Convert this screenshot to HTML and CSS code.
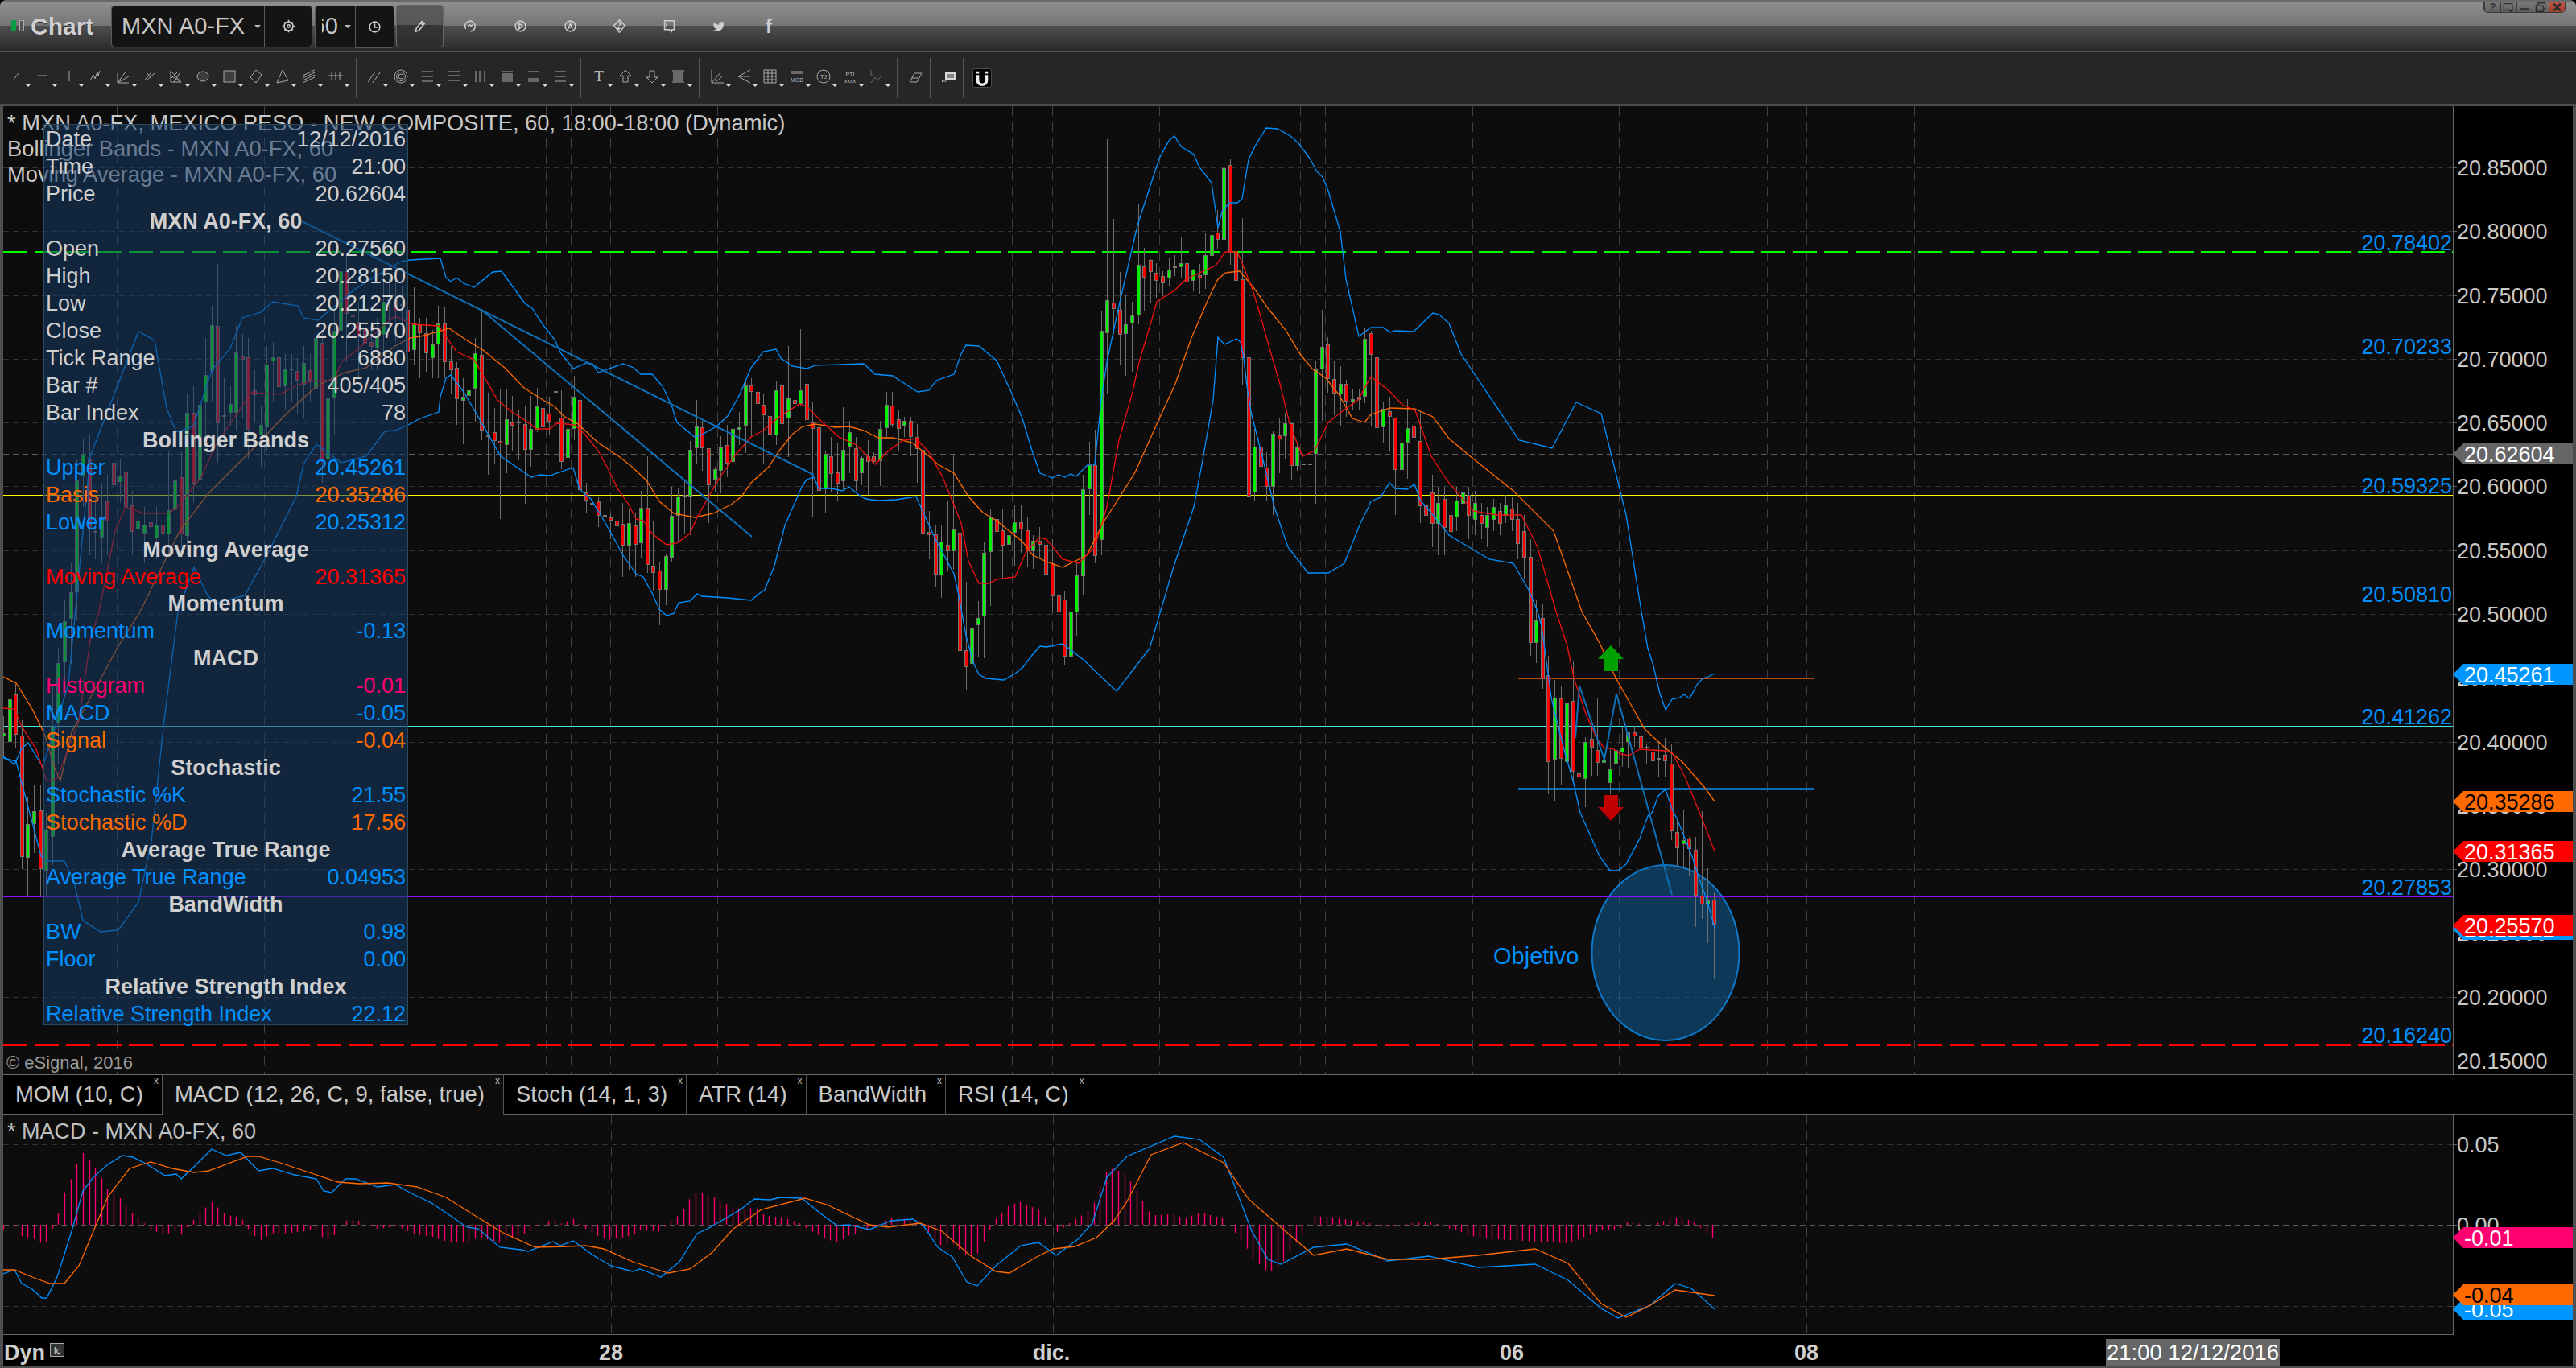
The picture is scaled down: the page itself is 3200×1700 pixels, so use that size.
FILE: index.html
```html
<!DOCTYPE html>
<html lang="es">
<head>
    <meta charset="UTF-8">
    <title>Chart - MXN A0-FX</title>
    <link rel="stylesheet" href="styles.css">
</head>
<body>
    <div class="window">
        <div class="titlebar">
            <div class="logo"><i></i><i></i></div>
            <div class="app-name">Chart</div>
            <div class="field symbol-field">
                <span class="symbol">MXN A0-FX</span><span class="caret"></span>
                <span class="field-icon"><svg class="bar-icon" viewBox="0 0 20 20"><circle cx="10" cy="10" r="6.5"/><circle cx="10" cy="10" r="2"/><path d="M10 1v3M10 16v3M1 10h3M16 10h3M4 4l2 2M14 14l2 2M16 4l-2 2M4 16l2-2"/></svg></span>
            </div>
            <div class="field interval-field"><span class="interval">60</span><span class="caret"></span></div>
            <div class="field clock-field"><svg class="bar-icon" viewBox="0 0 20 20"><circle cx="10" cy="10" r="7.5"/><path d="M10 5v5.5h4"/></svg></div>
            <div class="pencil-btn"><svg class="bar-icon" viewBox="0 0 20 20"><path d="M5 13L13 3l4 3-8 10-5 2zM11 5.500l4 3"/></svg></div>
            <div class="bar-btn"><svg class="bar-icon" viewBox="0 0 20 20"><path d="M3 14A7.500 7.500 0 1 1 10 17.500M6 11l3-3 2 2 3-3"/></svg></div>
            <div class="bar-btn"><svg class="bar-icon" viewBox="0 0 20 20"><circle cx="10" cy="10" r="7.500"/><path d="M8 6l5 4-5 4z"/></svg></div>
            <div class="bar-btn"><svg class="bar-icon" viewBox="0 0 20 20"><circle cx="10" cy="10" r="7.500"/><path d="M7 14l3-8 3 8M8 11.500h4"/></svg></div>
            <div class="bar-btn"><svg class="bar-icon" viewBox="0 0 20 20"><path d="M10 1l8 8-8 10-8-10z"/><path class="solid" d="M11 3l3 3h-2v3h-2V6H8zM9 16l-3-3h2v-3h2v3h2z"/></svg></div>
            <div class="bar-btn"><svg class="bar-icon" viewBox="0 0 20 20"><path d="M3 2h14v13h-3l-1 3-3-3H3zM6 6v5"/></svg></div>
            <div class="bar-btn"><svg class="bar-icon soft" viewBox="0 0 24 24"><path class="solid" d="M23 3a10.900 10.900 0 0 1-3 1.500 4.500 4.500 0 0 0-7.900 3v1A10.700 10.700 0 0 1 3 4s-4 9 5 13a11.600 11.600 0 0 1-7 2c9 5 20 0 20-11.500a4.500 4.500 0 0 0-.1-.8A7.700 7.700 0 0 0 23 3z"/></svg></div>
            <div class="bar-btn"><span class="facebook">f</span></div>
            <div class="win-btns">
                <span class="win-btn">?</span>
                <span class="win-btn"><svg viewBox="0 0 20 16"><path d="M3 3h12v9H3zM10 12l3 2 3-2z"/></svg></span>
                <span class="win-btn"><svg viewBox="0 0 20 16"><path class="thick" d="M4 11h12"/></svg></span>
                <span class="win-btn"><svg viewBox="0 0 20 16"><path d="M3 6h10v8H3zM6 5V2h10v8h-2"/></svg></span>
                <span class="win-btn win-close"><svg viewBox="0 0 20 16"><path class="thick" d="M5 3l10 10M15 3L5 13"/></svg></span>
            </div>
        </div>

        <div class="toolbar">
            <span class="tool"><svg viewBox="0 0 20 20"><path d="M5 15l7-9"/></svg></span>
            <span class="tool"><svg viewBox="0 0 20 20"><path d="M3 9h12"/></svg></span>
            <span class="tool"><svg viewBox="0 0 20 20"><path d="M9 3v13"/></svg></span>
            <span class="tool"><svg viewBox="0 0 20 20"><path d="M2 15l4-7 2 5 3-9 1 5 2-6"/></svg></span>
            <span class="tool"><svg viewBox="0 0 20 20"><path d="M3 18L14 3M3 18l14-8M3 18h14M3 18V6"/></svg></span>
            <span class="tool"><svg viewBox="0 0 20 20"><path d="M3 15L13 4M6 15L16 6M7 6l5 7"/></svg></span>
            <span class="tool"><svg viewBox="0 0 20 20"><path d="M3 3l13 14M3 9l13 8M3 17h13M3 3v14M7 17l7-11M3 13l9-9"/></svg></span>
            <span class="tool"><svg viewBox="0 0 20 20"><ellipse class="shade" cx="10" cy="10" rx="7" ry="6"/></svg></span>
            <span class="tool"><svg viewBox="0 0 20 20"><rect class="shade" x="3" y="3" width="14" height="14"/></svg></span>
            <span class="tool"><svg viewBox="0 0 20 20"><path d="M3 11l7-9 7 6-7 10z"/></svg></span>
            <span class="tool"><svg viewBox="0 0 20 20"><path d="M3 18L10 2l7 13z"/></svg></span>
            <span class="tool"><svg viewBox="0 0 20 20"><path d="M2 9l15-7M2 12l15-7M2 15l15-7M2 18l15-7"/></svg></span>
            <span class="tool"><svg viewBox="0 0 20 20"><path d="M1 9h18M5 4v10M10 4v10M15 4v10"/></svg></span>
            <span class="tool-sep"></span>
            <span class="tool"><svg viewBox="0 0 20 20"><path d="M2 17L11 4M8 18L17 5"/></svg></span>
            <span class="tool"><svg viewBox="0 0 20 20"><circle cx="10" cy="10" r="8"/><circle cx="10" cy="10" r="5.500"/><circle cx="10" cy="10" r="3"/></svg></span>
            <span class="tool"><svg viewBox="0 0 20 20"><path d="M3 4h14M3 10h14M3 16h14"/></svg></span>
            <span class="tool"><svg viewBox="0 0 20 20"><path d="M3 4h14M3 9h14M3 15h14"/></svg></span>
            <span class="tool"><svg viewBox="0 0 20 20"><path d="M4 3v14M9 3v14M15 3v14"/></svg></span>
            <span class="tool"><svg viewBox="0 0 20 20"><path d="M3 4h14M3 16h14"/><rect class="band" x="3" y="6" width="14" height="8"/></svg></span>
            <span class="tool"><svg viewBox="0 0 20 20"><path d="M3 4h14M3 13h14M3 16h14"/></svg></span>
            <span class="tool"><svg viewBox="0 0 20 20"><path d="M3 4h14M3 10h14M3 16h14"/></svg></span>
            <span class="tool-sep"></span>
            <span class="tool"><svg viewBox="0 0 20 20"><text class="tool-t" x="10" y="16">T</text></svg></span>
            <span class="tool"><svg viewBox="0 0 20 20"><path d="M10 2l7 7h-4v8H7V9H3z"/></svg></span>
            <span class="tool"><svg viewBox="0 0 20 20"><path d="M10 18l7-7h-4V3H7v8H3z"/></svg></span>
            <span class="tool"><svg viewBox="0 0 20 20"><path d="M2 3h15M2 17h15"/><rect class="band" x="3" y="4" width="13" height="12"/></svg></span>
            <span class="tool-sep"></span>
            <span class="tool"><svg viewBox="0 0 20 20"><path d="M3 2v16h15M4 17L15 4M8 17l8-7"/></svg></span>
            <span class="tool"><svg viewBox="0 0 20 20"><path d="M18 2L3 10l15 8M3 10h15"/></svg></span>
            <span class="tool"><svg viewBox="0 0 20 20"><path d="M2 2h15v16H2zM2 6h15M2 10h15M2 14h15M7 2v16M12 2v16"/></svg></span>
            <span class="tool"><svg viewBox="0 0 20 20"><rect class="band" x="2" y="3" width="16" height="4"/><text class="tool-small" x="10" y="17">MOB</text></svg></span>
            <span class="tool"><svg viewBox="0 0 20 20"><circle cx="10" cy="10" r="8"/><text class="tool-small" x="10" y="13">TJ</text></svg></span>
            <span class="tool"><svg viewBox="0 0 20 20"><text class="tool-small" x="10" y="10">PTI</text><text class="tool-small" x="10" y="18">xxxx</text></svg></span>
            <span class="tool tool-dim"><svg viewBox="0 0 20 20"><path d="M3 2v6h3M3 18l5-7 3 4 5-6"/></svg></span>
            <span class="tool-sep"></span>
            <span class="tool plain"><svg viewBox="0 0 20 20"><path d="M3 17L9 6h9l-6 11zM6 12h9"/></svg></span>
            <span class="tool-sep"></span>
            <span class="tool plain"><svg viewBox="0 0 20 20"><path class="solid" d="M6 5h13v10H6z"/><path class="cut" d="M8 8h9M8 11h9"/><path d="M2 16h6M4 14l-2 2 2 2"/></svg></span>
            <span class="tool-sep"></span>
            <span class="magnet"><svg viewBox="0 0 24 24"><path d="M6 8v7a6 6 0 0 0 12 0V8"/><path class="tip" d="M6 3v3M18 3v3"/></svg></span>
        </div>

        <div class="workspace">
            <div class="pane main-pane">
                <div class="plot">
                    <svg id="mainPlot" class="plot-svg" viewBox="4 132 3043 1203"></svg>
                    <div class="legend">
                        <div>* MXN A0-FX, MEXICO PESO - NEW COMPOSITE, 60, 18:00-18:00 (Dynamic)</div>
                        <div>Bollinger Bands - MXN A0-FX, 60</div>
                        <div>Moving Average - MXN A0-FX, 60</div>
                    </div>
                    <div class="copyright">© eSignal, 2016</div>
                    <div class="data-panel">
                        <div class="row"><span>Date</span><span>12/12/2016</span></div>
                        <div class="row"><span>Time</span><span>21:00</span></div>
                        <div class="row"><span>Price</span><span>20.62604</span></div>
                        <div class="row head">MXN A0-FX, 60</div>
                        <div class="row"><span>Open</span><span>20.27560</span></div>
                        <div class="row"><span>High</span><span>20.28150</span></div>
                        <div class="row"><span>Low</span><span>20.21270</span></div>
                        <div class="row"><span>Close</span><span>20.25570</span></div>
                        <div class="row"><span>Tick Range</span><span>6880</span></div>
                        <div class="row"><span>Bar #</span><span>405/405</span></div>
                        <div class="row"><span>Bar Index</span><span>78</span></div>
                        <div class="row head">Bollinger Bands</div>
                        <div class="row blue"><span>Upper</span><span>20.45261</span></div>
                        <div class="row orange"><span>Basis</span><span>20.35286</span></div>
                        <div class="row blue"><span>Lower</span><span>20.25312</span></div>
                        <div class="row head">Moving Average</div>
                        <div class="row red"><span>Moving Average</span><span>20.31365</span></div>
                        <div class="row head">Momentum</div>
                        <div class="row blue"><span>Momentum</span><span>-0.13</span></div>
                        <div class="row head">MACD</div>
                        <div class="row pink"><span>Histogram</span><span>-0.01</span></div>
                        <div class="row blue"><span>MACD</span><span>-0.05</span></div>
                        <div class="row orange"><span>Signal</span><span>-0.04</span></div>
                        <div class="row head">Stochastic</div>
                        <div class="row blue"><span>Stochastic %K</span><span>21.55</span></div>
                        <div class="row orange"><span>Stochastic %D</span><span>17.56</span></div>
                        <div class="row head">Average True Range</div>
                        <div class="row blue"><span>Average True Range</span><span>0.04953</span></div>
                        <div class="row head">BandWidth</div>
                        <div class="row blue"><span>BW</span><span>0.98</span></div>
                        <div class="row blue"><span>Floor</span><span>0.00</span></div>
                        <div class="row head">Relative Strength Index</div>
                        <div class="row blue"><span>Relative Strength Index</span><span>22.12</span></div>
                    </div>
                </div>
                <svg id="mainAxis" class="axis-svg" viewBox="3047 132 149 1203"></svg>
            </div>

            <div class="tabs">
                <div class="tab">MOM (10, C)<span class="tab-x">x</span></div>
                <div class="tab active">MACD (12, 26, C, 9, false, true)<span class="tab-x">x</span></div>
                <div class="tab">Stoch (14, 1, 3)<span class="tab-x">x</span></div>
                <div class="tab">ATR (14)<span class="tab-x">x</span></div>
                <div class="tab">BandWidth<span class="tab-x">x</span></div>
                <div class="tab">RSI (14, C)<span class="tab-x">x</span></div>
            </div>

            <div class="pane study-pane">
                <div class="plot">
                    <svg id="studyPlot" class="plot-svg" viewBox="4 1385 3043 274"></svg>
                    <div class="study-title">* MACD - MXN A0-FX, 60</div>
                </div>
                <svg id="studyAxis" class="axis-svg" viewBox="3047 1385 149 274"></svg>
            </div>

            <svg id="timeAxis" class="time-axis" viewBox="4 1659 3192 38"></svg>
        </div>
    </div>
    <script src="chart.js"></script>
</body>
</html>
```

FILE: styles.css
```css
* {
    box-sizing: border-box;
}

body {
    margin: 0;
    background: #000;
    font-family: "Liberation Sans", Arial, sans-serif;
    color: #c8c8c8;
    overflow: hidden;
}

.window {
    width: 3200px;
    height: 1700px;
    display: flex;
    flex-direction: column;
    background: #4f4f4f;
    border-radius: 8px 8px 0 0;
    overflow: hidden;
}

/* title bar */
.titlebar {
    height: 63px;
    flex: none;
    display: flex;
    align-items: center;
    padding-left: 14px;
    border-top: 2px solid #6a6a6a;
    background: linear-gradient(#8f8f8f 0, #757575 30px, #4e4e4e 30px, #2b2b2b 100%);
}

.logo {
    display: flex;
    gap: 4px;
    margin-top: -2px;
}

.logo i {
    width: 6px;
    height: 14px;
    background: #0c9c45;
}

.logo i + i {
    background: #555;
    border: 1px solid #aaa;
}

.app-name {
    margin-left: 8px;
    width: 100px;
    font-size: 30px;
    font-weight: bold;
    color: #d0d0d0;
    text-shadow: 0 1px 1px #222;
}

.field {
    height: 52px;
    display: flex;
    align-items: center;
    background: #141414;
    border: 1px solid #5a5a5a;
    border-radius: 4px;
}

.symbol-field {
    width: 250px;
    padding-left: 12px;
}

.symbol {
    width: 166px;
    font-size: 29px;
}

.caret {
    width: 0;
    height: 0;
    border: 4px solid transparent;
    border-top: 4px solid #bbb;
    border-bottom: 0;
}

.field-icon {
    margin-left: 4px;
    width: 59px;
    height: 100%;
    display: flex;
    align-items: center;
    justify-content: center;
    border-left: 1px solid #5a5a5a;
}

.interval-field {
    width: 50px;
    margin-left: 3px;
    padding-right: 5px;
    justify-content: flex-end;
    border-radius: 4px 0 0 4px;
    border-right: 0;
    overflow: hidden;
}

.interval {
    width: 20px;
    margin-right: 8px;
    font-size: 29px;
    direction: rtl;
    overflow: hidden;
}

.clock-field {
    width: 49px;
    height: 53px;
    justify-content: center;
    margin-top: 2px;
    border-radius: 0 4px 4px 0;
}

.pencil-btn {
    width: 59px;
    height: 53px;
    margin-left: 2px;
    display: flex;
    align-items: center;
    justify-content: center;
    background: linear-gradient(#5b5b5b 0, #565656 48%, #363636 48%, #2c2c2c 100%);
    border: 1px solid #666;
    border-radius: 4px;
}

.bar-btn {
    width: 61.7px;
    flex: none;
    display: flex;
    justify-content: center;
}

.pencil-btn + .bar-btn {
    margin-left: 3px;
}

.bar-icon {
    width: 17px;
    height: 17px;
    fill: none;
    stroke: #cfcfcf;
    stroke-width: 1.8;
}

.bar-icon.soft {
    width: 16px;
    height: 16px;
}

.bar-icon .solid {
    fill: #cfcfcf;
    stroke: none;
}

.facebook {
    font-size: 24px;
    font-weight: bold;
    line-height: 24px;
    color: #cfcfcf;
}

.win-btns {
    margin-left: auto;
    margin-right: 13px;
    align-self: flex-start;
    display: flex;
    height: 14px;
    border: 1px solid #3a3a3a;
    border-top: 0;
    border-radius: 0 0 5px 5px;
    overflow: hidden;
}

.win-btn {
    width: 20px;
    height: 100%;
    display: flex;
    align-items: center;
    justify-content: center;
    font-size: 13px;
    font-weight: bold;
    line-height: 13px;
    color: #2d2d2d;
    background: linear-gradient(#7c7c7c, #5f5f5f);
    border-left: 1px solid #3a3a3a;
}

.win-btn svg {
    width: 20px;
    height: 14px;
    fill: none;
    stroke: #2d2d2d;
    stroke-width: 1.5;
}

.win-btn .thick {
    stroke-width: 3;
}

.win-close {
    background: linear-gradient(#c0564a, #a2402f);
}

/* drawing tools */
.toolbar {
    height: 65px;
    flex: none;
    display: flex;
    align-items: center;
    padding-left: 5.5px;
    margin-top: 1px;
    background: #262626;
}

.tool {
    position: relative;
    width: 33px;
    height: 24px;
    padding-right: 2px;
    flex: none;
    display: flex;
    justify-content: center;
}

.tool::after {
    content: "";
    position: absolute;
    right: 1px;
    bottom: 1px;
    border: 3px solid transparent;
    border-top: 3px solid #ddd;
    border-bottom: 0;
}

.tool svg {
    width: 20px;
    height: 20px;
    fill: none;
    stroke: #a8a8a8;
    stroke-width: 1;
}

.tool .shade {
    fill: #3d3d3d;
}

.tool .band {
    fill: #6a6a6a;
    stroke: none;
}

.tool .solid {
    fill: #d8d8d8;
    stroke: none;
}

.tool .cut {
    stroke: #333;
}

.tool-t {
    font-family: "Liberation Serif", serif;
    font-size: 19px;
    fill: #bbb;
    stroke: none;
    text-anchor: middle;
}

.tool-small {
    font-size: 7px;
    fill: #bbb;
    stroke: none;
    text-anchor: middle;
}

.tool-dim svg {
    stroke: #666;
}

.tool.plain {
    width: 26px;
    padding: 0 0 0 4px;
}

.tool.plain::after {
    display: none;
}

.tool-sep {
    width: 1px;
    height: 50px;
    margin: 0 7px;
    flex: none;
    background: #555;
}

.magnet {
    margin-left: 4.5px;
    width: 24px;
    height: 24px;
    background: #000;
    border: 1px solid #4c4c4c;
    border-radius: 3px;
}

.magnet svg {
    display: block;
    width: 22px;
    height: 22px;
    fill: none;
    stroke: #eee;
    stroke-width: 4;
}

/* chart area */
.workspace {
    margin: 3px 4px 3px;
    height: 1565px;
    display: flex;
    flex-direction: column;
    background: #000;
}

.pane {
    display: flex;
}

.main-pane {
    height: 1203px;
}

.study-pane {
    height: 274px;
}

.plot {
    position: relative;
    width: 3043px;
    height: 100%;
    flex: none;
    background: #0d0d0d;
    overflow: hidden;
}

.plot-svg,
.axis-svg {
    display: block;
    height: 100%;
}

.plot-svg {
    width: 100%;
}

.axis-svg {
    width: 149px;
    flex: none;
}

.legend {
    position: absolute;
    left: 5px;
    top: 5px;
    font-size: 27.3px;
    line-height: 32px;
    color: #c8c8c8;
    white-space: nowrap;
}

.copyright {
    position: absolute;
    left: 4px;
    bottom: 1px;
    font-size: 22px;
    color: #9a9a9a;
}

.study-title {
    position: absolute;
    left: 5px;
    top: 6px;
    font-size: 27px;
    color: #c0c0c0;
}

.data-panel {
    position: absolute;
    left: 50px;
    top: 22px;
    width: 453px;
    height: 1120px;
    padding: 1px 2px 0;
    background: rgba(22, 59, 104, 0.54);
    border: 1px solid #2a4a62;
    font-size: 27px;
    line-height: 34px;
    white-space: nowrap;
}

.row {
    height: 33.97px;
    display: flex;
    justify-content: space-between;
    color: #cfcfcf;
}

.row.head {
    justify-content: center;
    font-weight: bold;
}

.row.blue {
    color: #0090ff;
}

.row.orange {
    color: #ff6a00;
}

.row.red {
    color: #ff0000;
}

.row.pink {
    color: #ff0070;
}

.tabs {
    height: 50px;
    flex: none;
    display: flex;
    background: #000;
    border-top: 1px solid #666;
    border-bottom: 1px solid #666;
}

.tab {
    position: relative;
    padding: 0 23px 0 15px;
    font-size: 27.5px;
    line-height: 48px;
    border-right: 1px solid #555;
    white-space: nowrap;
    color: #c8c8c8;
}

.tab.active {
    height: 49px;
    background: #0d0d0d;
}

.tab-x {
    position: absolute;
    right: 4px;
    top: 1px;
    font-size: 12px;
    line-height: 13px;
    color: #bbb;
}

.time-axis {
    display: block;
    width: 3192px;
    height: 38px;
    flex: none;
}

/* svg drawing */
.grid {
    stroke: #333;
    stroke-dasharray: 7 5;
    shape-rendering: crispEdges;
}

.grid-v {
    stroke: #404040;
    stroke-dasharray: 12 8;
    shape-rendering: crispEdges;
}

.grid-mark {
    stroke: #5a5a5a;
    stroke-dasharray: 7 5;
    shape-rendering: crispEdges;
}

.level {
    stroke-width: 1;
    shape-rendering: crispEdges;
}

.level-green {
    stroke: #00ff00;
    stroke-width: 3;
    stroke-dasharray: 30 9;
}

.level-white {
    stroke: #f0f0f0;
}

.level-yellow {
    stroke: #ffff00;
}

.level-darkred {
    stroke: #d01414;
}

.level-cyan {
    stroke: #40e8e8;
}

.level-purple {
    stroke: #8c10ff;
}

.level-reddash {
    stroke: #ff0000;
    stroke-width: 3;
    stroke-dasharray: 30 9;
}

.level-box-orange {
    stroke: #b84c10;
    stroke-width: 2;
}

.level-box-blue {
    stroke: #0a6cb4;
    stroke-width: 3;
}

.target {
    fill: rgba(16, 96, 156, 0.52);
    stroke: #0f78c8;
    stroke-width: 2;
}

.wick {
    stroke: #6e6e6e;
    stroke-width: 1;
    shape-rendering: crispEdges;
}

.candle {
    stroke: #777;
    stroke-width: 1;
    shape-rendering: crispEdges;
}

.candle-g {
    fill: #00ee00;
}

.candle-r {
    fill: #ff0000;
}

.candle-d {
    fill: #777;
}

.line {
    fill: none;
    stroke-width: 1.3;
}

.line-blue {
    stroke: #0090ff;
}

.line-red {
    stroke: #f01010;
}

.line-orange {
    stroke: #ff6a00;
}

.line-trend {
    stroke: #0d70b8;
    stroke-width: 2;
}

.hist {
    stroke: #ff0070;
    stroke-width: 1.4;
}

.arrow-up {
    fill: #00a000;
}

.arrow-down {
    fill: #c00000;
}

.target-label {
    font-size: 29px;
    fill: #0090ff;
}

.level-label {
    font-size: 27px;
    fill: #0090ff;
    text-anchor: end;
}

.axis-label {
    font-size: 27px;
    fill: #c8c8c8;
}

.axis-tick,
.axis-line {
    stroke: #666;
    shape-rendering: crispEdges;
}

.tag-label {
    font-size: 27px;
    fill: #fff;
}

.tag-label.dark {
    fill: #000;
}

.tag-grey {
    fill: #666;
}

.tag-blue {
    fill: #0096ff;
}

.tag-orange {
    fill: #ff6a00;
}

.tag-red {
    fill: #ff0000;
}

.tag-pink {
    fill: #ff0070;
}

.time-label {
    font-size: 27px;
    font-weight: bold;
    fill: #cfcfcf;
    text-anchor: middle;
}

.time-label.dyn-label {
    text-anchor: start;
}

.time-tag {
    fill: #666;
}

.time-now {
    font-size: 27.500px;
    fill: #fff;
    text-anchor: middle;
}

.dyn-box {
    fill: #333;
    stroke: #aaa;
}

.dyn-mark {
    font-size: 11px;
    fill: #ddd;
    text-anchor: middle;
}
```

FILE: chart.js
```js
// MXN A0-FX chart. All the numbers below are screen pixels of the window,
// the svg viewBoxes are set so the plots can use them directly.
const NS = 'http://www.w3.org/2000/svg';
const BAR_STEP = 7.61;

function add(svg, tag, attrs, text) {
    const node = document.createElementNS(NS, tag);
    for (const key in attrs) {
        node.setAttribute(key, attrs[key]);
    }
    if (text !== undefined) {
        node.textContent = text;
    }
    svg.appendChild(node);
    return node;
}

function priceY(p) {
    return 208 + (20.85 - p) * 1585.7;
}

function drawLine(svg, points, cls) {
    add(svg, 'polyline', { points: points.map(p => p.join(',')).join(' '), class: 'line ' + cls });
}

// rows: [body top, body bottom, wick top, wick bottom, kind]
function drawCandles(svg, startX, rows) {
    rows.forEach((row, i) => {
        const x = Math.round(startX + i * BAR_STEP);
        const [top, bottom, wickTop, wickBottom, kind] = row;
        add(svg, 'line', { x1: x + 0.5, x2: x + 0.5, y1: wickTop, y2: wickBottom, class: 'wick' });
        add(svg, 'rect', {
            x: x - 1.5,
            y: top + 0.5,
            width: 4,
            height: Math.max(bottom - top, 1),
            class: 'candle candle-' + kind
        });
    });
}

function drawTag(svg, y, label, color, dark) {
    const t = y - 13;
    const b = y + 13;
    add(svg, 'polygon', { points: `3047,${y} 3060,${t} 3196,${t} 3196,${b} 3060,${b}`, class: 'tag-' + color });
    add(svg, 'text', { x: 3061, y: y + 10, class: dark ? 'tag-label dark' : 'tag-label' }, label);
}

// price pane data
const candlesLeft = [
    [911,914,890,940,'g'], [869,921,850,945,'g'], [863,912,850,930,'r'], [914,1064,895,1080,'r'],
    [1024,1065,990,1113,'g'], [1008,1023,975,1060,'g'], [1007,1079,975,1113,'r'], [1031,1081,1010,1113,'g'],
    [903,1039,850,1075,'g'], [824,897,805,950,'g'], [772,822,745,860,'g'], [736,768,700,825,'g'],
    [597,735,570,770,'g'], [564,590,545,630,'g'], [570,657,540,690,'r'], [660,661,620,695,'d'],
    [645,667,600,700,'g'], [623,647,590,690,'r'], [575,602,555,650,'r'], [592,598,570,625,'g'],
    [586,629,575,670,'r'], [628,660,610,690,'r'], [647,657,625,680,'g'], [652,662,630,700,'g'],
    [649,654,625,680,'r'], [652,668,630,695,'g'], [652,662,635,680,'r'], [634,663,560,690,'g'],
    [597,633,575,650,'g'], [593,663,560,680,'r'], [513,665,490,690,'g'], [513,600,480,625,'r'],
    [503,595,470,615,'g'], [466,499,420,540,'g'], [404,460,380,500,'g'], [405,525,328,575,'r'],
    [516,517,470,550,'d'], [502,512,480,530,'g'], [438,512,405,535,'g'], [443,446,415,520,'r'],
    [444,533,420,570,'r'], [485,490,460,525,'r'], [528,540,505,580,'g'], [453,530,430,560,'g'],
    [444,448,425,500,'g'], [444,480,430,520,'r'], [459,479,440,510,'g'], [458,459,440,500,'d'],
    [461,472,445,515,'r'], [451,477,430,520,'g'], [460,472,440,500,'r'], [420,482,395,540,'g'],
    [426,570,410,600,'r'], [495,570,470,610,'g'], [411,493,385,540,'g'], [337,410,300,510,'g'],
    [337,389,315,450,'r'], [391,393,370,450,'r'], [400,418,375,470,'r'], [408,427,395,470,'r'],
    [425,430,400,460,'r'], [417,432,395,460,'g'], [375,415,340,440,'g'], [372,373,345,410,'d'],
    [373,386,345,425,'r'], [378,379,355,420,'d'], [385,437,352,472,'r'], [402,434,357,453,'g'],
    [404,413,395,470,'r'], [414,438,395,462,'r'], [428,444,410,470,'g'], [402,427,380,470,'g'],
    [402,449,381,470,'r'], [449,459,430,490,'r'], [457,495,450,528,'r'], [493,497,470,552,'g'],
    [485,491,470,530,'g'], [439,482,420,525,'g'], [441,534,384,547,'r']
];

const candlesMid = [
    [541,542,488,590,'d'], [537,547,507,577,'r'], [548,550,483,645,'r'], [521,552,483,588,'g'],
    [525,528,492,560,'r'], [524,525,510,572,'d'], [527,558,505,626,'r'], [533,558,492,580,'g'],
    [505,533,482,537,'g'], [507,530,462,538,'r'], [514,523,493,540,'r'], [486,487,486,487,'d'],
    [519,573,485,583,'r'], [533,568,513,593,'g'], [493,532,467,547,'g'], [497,608,483,613,'r'],
    [612,621,600,638,'r'], [625,626,607,642,'d'], [623,640,617,655,'r'], [640,641,627,658,'d'],
    [643,646,637,670,'r'], [647,653,625,698,'r'], [651,677,625,717,'r'], [650,677,632,708,'g'],
    [653,676,637,717,'r'], [631,674,610,693,'g'], [631,701,567,712,'r'], [703,711,647,735,'r'],
    [709,732,698,777,'r'], [691,732,688,752,'g'], [641,692,605,698,'g'], [617,640,607,673,'g'],
    [615,616,597,663,'d'], [559,616,548,665,'g'], [530,556,497,577,'g'], [531,556,523,585,'r'],
    [557,602,557,650,'r'], [583,595,580,612,'g'], [556,584,542,613,'g'], [553,575,528,593,'r'],
    [533,573,512,593,'g'], [531,533,512,553,'g'], [479,528,472,563,'g'], [479,486,470,543,'r'],
    [487,501,480,605,'r'], [503,515,490,577,'r'], [517,539,473,598,'r'], [485,540,473,553,'g'],
    [479,526,468,557,'r'], [495,519,430,568,'g'], [497,501,429,527,'r'], [485,501,409,505,'g'],
    [477,521,452,583,'r'], [525,532,500,643,'r'], [531,609,504,618,'r'], [564,607,560,637,'g'],
    [567,588,543,612,'r'], [587,600,550,622,'r'], [559,597,506,610,'g'], [537,554,523,588,'g'],
    [557,597,543,610,'r'], [569,587,567,603,'g'], [567,573,547,615,'r'], [567,573,562,577,'r'],
    [533,572,523,604,'g'], [503,531,487,543,'g'], [504,527,487,531,'r'], [521,532,510,560,'r'],
    [523,528,518,543,'g'], [523,542,518,567,'r'], [543,557,527,600,'r'], [559,662,547,680,'r'],
    [661,664,635,695,'r'], [664,713,652,730,'r'], [673,714,652,743,'g'], [677,684,623,710,'r'],
    [658,684,564,708,'g'], [662,808,662,812,'r'], [808,828,723,858,'r'], [781,824,753,853,'g'],
    [768,776,747,817,'g'], [687,765,673,818,'g'], [643,685,633,753,'g'], [645,660,643,720,'r'],
    [659,677,633,720,'r'], [665,676,633,687,'g'], [649,661,627,703,'g'], [649,657,627,687,'r'],
    [659,684,643,705,'r'], [672,684,665,707,'g'], [672,676,655,693,'r'], [677,713,663,730,'r']
];

const candlesTop = [
    [700,740,670,760,'r'], [740,760,690,780,'r'], [745,815,735,826,'r'], [760,815,587,826,'g'],
    [715,760,700,790,'g'], [608,715,590,740,'g'], [578,607,549,640,'g'], [578,690,534,700,'r'],
    [411,670,387,690,'g'], [373,413,173,490,'g'], [376,383,272,415,'r'], [385,415,338,453,'r'],
    [403,414,367,467,'g'], [392,401,375,462,'g'], [329,391,253,403,'g'], [331,344,308,386,'r'],
    [323,337,322,376,'r'], [339,348,327,370,'r'], [343,351,337,368,'r'], [335,345,320,355,'g'],
    [330,332,317,343,'d'], [327,331,294,346,'g'], [327,350,325,369,'r'], [335,348,334,362,'g'],
    [342,345,328,365,'r'], [317,341,290,359,'g'], [292,317,256,361,'g'], [289,297,261,310,'r'],
    [209,297,200,302,'g'], [205,313,198,329,'r'], [314,348,280,376,'r'], [347,444,271,478,'r'],
    [444,616,424,640,'r'], [555,611,533,623,'g'], [555,579,537,623,'r'], [581,604,562,623,'r'],
    [539,604,535,640,'g'], [541,545,520,588,'r'], [526,541,513,570,'g'], [526,578,525,596,'r'],
    [556,578,550,585,'g'], [576,577,576,577,'d'], [576,577,576,577,'d'], [459,563,448,626,'g'],
    [431,458,385,523,'g'], [428,470,419,488,'r'], [471,488,449,516,'r'], [477,489,455,529,'g'],
    [477,498,472,518,'r'], [496,498,483,510,'g'], [493,496,483,510,'g'], [421,492,408,501,'g'],
    [414,440,411,530,'r'], [444,531,436,587,'r'], [508,530,499,550,'g'], [511,517,493,560,'r'],
    [519,583,519,640,'r'], [550,583,514,640,'g'], [532,549,496,595,'g'], [529,543,513,590,'r'],
    [548,628,512,650,'r'], [628,640,605,670,'r'], [612,650,590,680,'r'], [625,650,605,690,'g'],
    [620,655,605,690,'r'], [640,660,615,690,'r'], [622,642,605,660,'g'], [612,625,600,650,'g'],
    [615,640,605,670,'r'], [625,645,610,665,'g'], [640,650,625,670,'r'], [640,655,630,680,'g'],
    [630,645,620,660,'g'], [635,650,625,665,'r'], [628,640,615,650,'g'], [632,645,618,660,'r'],
    [645,675,625,695,'r'], [660,692,640,720,'r'], [692,798,670,815,'r'], [771,798,745,824,'g'],
    [768,842,750,856,'r'], [839,946,815,987,'r'], [867,943,845,995,'g'], [868,942,852,976,'r'],
    [874,946,869,962,'g'], [871,958,822,974,'r'], [961,965,937,1072,'r'], [922,967,916,1003,'g'],
    [918,928,903,964,'r'], [932,947,867,964,'r'], [944,947,913,974,'g'], [956,972,931,987,'g'],
    [932,948,923,979,'g'], [929,934,903,953,'g'], [910,921,910,954,'g'], [910,914,902,928,'r'],
    [915,929,911,947,'r'], [928,929,924,949,'d'], [934,945,921,954,'r'], [942,943,921,965,'d'],
    [938,945,917,966,'r'], [949,1032,925,1044,'r'], [1034,1053,1018,1076,'r'], [1044,1048,1006,1078,'g'],
    [1042,1054,1040,1089,'r'], [1056,1112,1040,1152,'r'], [1113,1123,1008,1142,'r'], [1119,1123,1079,1172,'g'],
    [1118,1149,1109,1217,'r']
];

const upperBand = [
    [4,940],[18,950],[27,930],[35,923],[53,953],[85,850],[112,567],[143,487],[172,412],[192,423],[207,507],[219,537],
    [240,530],[250,500],[263,460],[286,433],[301,395],[324,388],[339,375],[370,380],[377,395],[395,398],[402,392],
    [440,360],[480,335],[498,325],[509,323],[547,321],[554,345],[560,350],[567,345],[576,352],[589,357],[612,338],
    [623,337],[652,377],[661,383],[674,403],[689,422],[696,438],[712,458],[729,451],[736,452],[743,463],[774,452],
    [787,457],[796,465],[810,465],[823,480],[834,503],[841,525],[863,543],[872,540],[890,530],[904,517],[919,490],
    [933,457],[948,437],[964,434],[970,445],[984,455],[1002,458],[1013,454],[1073,452],[1087,465],[1109,467],
    [1118,473],[1140,487],[1154,485],[1163,473],[1185,465],[1194,440],[1200,429],[1216,430],[1238,448],[1256,487],
    [1270,520],[1283,563],[1292,588],[1300,591],[1307,594],[1315,590],[1323,593],[1330,589],[1337,592],[1352,577],
    [1360,577],[1368,497],[1375,450],[1390,380],[1413,280],[1427,237],[1440,197],[1452,175],[1459,169],[1467,182],
    [1483,192],[1490,208],[1505,227],[1513,283],[1518,263],[1527,252],[1537,252],[1543,247],[1551,198],[1560,180],
    [1573,159],[1587,160],[1603,169],[1613,178],[1628,198],[1635,212],[1643,220],[1650,237],[1665,288],[1672,347],
    [1688,418],[1703,407],[1718,407],[1727,413],[1733,411],[1756,412],[1780,389],[1788,391],[1800,402],[1815,440],
    [1887,547],[1928,557],[1958,500],[1989,514],[2020,640],[2039,760],[2047,806],[2053,824],[2062,862],[2069,882],
    [2077,869],[2087,867],[2092,863],[2099,868],[2108,851],[2115,843],[2122,841],[2130,837]
];

const lowerBand = [
    [4,942],[20,946],[51,1064],[58,1070],[80,1070],[92,1096],[103,1144],[125,1158],[147,1156],[172,1121],[188,1046],
    [203,903],[221,760],[241,705],[258,740],[268,750],[304,740],[330,693],[368,617],[377,577],[393,552],[424,575],
    [455,567],[478,536],[491,535],[509,527],[522,520],[545,512],[547,493],[554,470],[560,466],[576,487],[598,525],
    [622,567],[660,593],[671,590],[683,591],[712,581],[720,608],[734,620],[752,650],[774,690],[790,713],[799,717],
    [810,737],[819,757],[828,765],[837,762],[843,749],[857,747],[866,738],[872,741],[904,743],[933,746],[944,737],
    [950,733],[962,703],[968,680],[975,653],[982,637],[997,603],[1002,596],[1011,593],[1017,607],[1033,607],
    [1046,610],[1055,605],[1064,613],[1075,620],[1091,622],[1113,621],[1138,617],[1147,637],[1162,670],[1185,713],
    [1191,740],[1200,790],[1209,823],[1216,838],[1225,843],[1247,845],[1261,837],[1270,830],[1283,813],[1292,803],
    [1300,804],[1320,800],[1346,820],[1387,859],[1428,806],[1458,704],[1483,630],[1493,577],[1507,497],[1513,419],
    [1521,428],[1536,421],[1541,425],[1545,445],[1549,480],[1554,512],[1567,563],[1583,630],[1600,680],[1625,712],
    [1650,712],[1670,700],[1690,650],[1700,630],[1703,623],[1715,618],[1726,600],[1733,607],[1748,608],[1757,602],
    [1765,623],[1772,630],[1800,665],[1850,695],[1880,700],[1900,735],[1910,760],[1915,778],[1927,867],[1933,892],
    [1942,928],[1955,974],[1963,1010],[1987,1064],[2000,1082],[2010,1082],[2020,1074],[2037,1042],[2047,1014],
    [2052,1010],[2060,989],[2069,981],[2077,1005],[2084,1019],[2093,1042],[2103,1067],[2110,1090],[2120,1117],[2130,1153]
];

const maLine = [
    [4,880],[18,881],[27,903],[45,931],[58,971],[71,967],[98,896],[112,796],[123,760],[143,660],[156,630],[179,638],
    [210,638],[223,627],[250,593],[268,553],[312,488],[348,490],[370,478],[390,473],[415,473],[424,450],[446,433],
    [473,407],[491,393],[513,403],[545,405],[567,437],[589,447],[600,466],[618,497],[636,512],[649,520],[667,533],
    [683,533],[692,526],[714,528],[725,538],[743,560],[754,580],[767,607],[781,627],[790,645],[799,647],[810,663],
    [828,677],[841,675],[857,663],[866,643],[890,600],[912,567],[933,543],[948,535],[968,518],[993,502],[1002,505],
    [1022,525],[1042,543],[1064,553],[1087,577],[1104,560],[1122,547],[1138,545],[1154,562],[1171,593],[1194,650],
    [1203,697],[1216,725],[1229,725],[1238,720],[1261,717],[1274,687],[1291,668],[1300,670],[1320,695],[1340,700],
    [1360,680],[1375,630],[1390,547],[1407,487],[1415,450],[1430,400],[1437,375],[1460,360],[1473,347],[1510,330],
    [1522,313],[1537,313],[1543,327],[1557,363],[1567,397],[1577,433],[1590,477],[1603,530],[1618,567],[1633,560],
    [1650,525],[1665,513],[1687,497],[1703,468],[1727,487],[1742,503],[1758,510],[1778,567],[1793,590],[1800,600],
    [1830,635],[1860,640],[1890,640],[1910,680],[1933,760],[1947,803],[1955,842],[1970,887],[1983,917],[1993,930],
    [2003,930],[2013,937],[2023,939],[2037,931],[2067,933],[2077,935],[2093,965],[2113,1014],[2130,1058]
];

const basisLine = [
    [4,841],[20,849],[40,881],[56,914],[68,955],[75,970],[89,910],[147,803],[174,760],[223,660],[259,613],[312,560],
    [357,513],[393,480],[428,463],[455,457],[491,430],[509,420],[527,417],[558,408],[580,423],[600,435],[627,457],
    [651,482],[676,498],[689,505],[700,517],[718,527],[743,550],[770,568],[785,580],[803,597],[819,623],[837,638],
    [863,643],[886,638],[908,627],[921,617],[933,600],[955,580],[968,560],[984,540],[997,530],[1013,527],[1038,531],
    [1055,530],[1073,535],[1091,544],[1109,544],[1133,550],[1154,567],[1165,577],[1185,588],[1203,617],[1221,637],
    [1238,647],[1270,673],[1283,690],[1300,698],[1320,705],[1350,690],[1370,650],[1383,630],[1410,587],[1437,527],
    [1460,477],[1480,420],[1503,367],[1513,347],[1522,339],[1540,337],[1557,357],[1575,383],[1597,410],[1615,440],
    [1630,458],[1647,470],[1663,490],[1680,520],[1695,525],[1703,515],[1727,507],[1757,508],[1780,518],[1800,545],
    [1830,570],[1880,610],[1910,640],[1930,660],[1965,760],[1987,799],[2007,842],[2043,906],[2067,928],[2090,947],
    [2117,978],[2130,996]
];

const levels = [
    [20.78402, 'level-green'],
    [20.70233, 'level-white'],
    [20.59325, 'level-yellow'],
    [20.5081, 'level-darkred'],
    [20.41262, 'level-cyan'],
    [20.27853, 'level-purple'],
    [20.1624, 'level-reddash']
];

const mainPlot = document.getElementById('mainPlot');
const mainAxis = document.getElementById('mainAxis');

add(mainAxis, 'line', { x1: 3047.5, x2: 3047.5, y1: 132, y2: 1335, class: 'axis-line' });

for (let p = 20.85; p > 20.14; p -= 0.05) {
    const y = Math.round(priceY(p));
    add(mainPlot, 'line', { x1: 4, x2: 3047, y1: y + 0.5, y2: y + 0.5, class: 'grid' });
    add(mainAxis, 'line', { x1: 3047, x2: 3052, y1: y + 0.5, y2: y + 0.5, class: 'axis-tick' });
    add(mainAxis, 'text', { x: 3052, y: y + 10, class: 'axis-label' }, p.toFixed(5));
}
add(mainPlot, 'line', { x1: 4, x2: 3047, y1: 564.5, y2: 564.5, class: 'grid-mark' });

[145.5, 328, 510, 678.5, 709, 758, 891.5, 1074, 1257.5, 1307, 1440, 1615, 1646, 1829, 1879, 2011, 2195, 2244, 2378, 2561, 2725].forEach(x => {
    add(mainPlot, 'line', { x1: x, x2: x, y1: 132, y2: 1335, class: 'grid-v' });
});

add(mainPlot, 'ellipse', { cx: 2069, cy: 1184, rx: 91.5, ry: 109, class: 'target' });

levels.forEach(([price, cls]) => {
    const y = Math.round(priceY(price));
    add(mainPlot, 'line', { x1: 4, x2: 3047, y1: y + 0.5, y2: y + 0.5, class: 'level ' + cls });
    add(mainPlot, 'text', { x: 3046, y: y - 2, class: 'level-label' }, price.toFixed(5));
});

add(mainPlot, 'line', { x1: 1886, x2: 2253, y1: 843, y2: 843, class: 'level level-box-orange' });
add(mainPlot, 'line', { x1: 1886, x2: 2253, y1: 980.5, y2: 980.5, class: 'level level-box-blue' });

drawCandles(mainPlot, 4, candlesLeft);
drawCandles(mainPlot, 606, candlesMid);
drawCandles(mainPlot, 1307, candlesTop);

drawLine(mainPlot, upperBand, 'line-blue');
drawLine(mainPlot, lowerBand, 'line-blue');
drawLine(mainPlot, basisLine, 'line-orange');
drawLine(mainPlot, maLine, 'line-red');
drawLine(mainPlot, [[375,275],[1011,590]], 'line-trend');
drawLine(mainPlot, [[598,385],[934,667]], 'line-trend');
drawLine(mainPlot, [[1957,917],[1962,852],[1993,944],[2008,862],[2077,1112]], 'line-trend line-blue');

add(mainPlot, 'polygon', { points: '2001,802 2017,819 2010,819 2010,834 1993,834 1993,819 1985,819', class: 'arrow-up' });
add(mainPlot, 'polygon', { points: '1993,988 2010,988 2010,1003 2017,1003 2001,1020 1985,1003 1993,1003', class: 'arrow-down' });
add(mainPlot, 'text', { x: 1855, y: 1198, class: 'target-label' }, 'Objetivo');

drawTag(mainAxis, 564, '20.62604', 'grey');
drawTag(mainAxis, 838, '20.45261', 'blue');
drawTag(mainAxis, 996, '20.35286', 'orange', true);
drawTag(mainAxis, 1058, '20.31365', 'red');
drawTag(mainAxis, 1155, '20.25312', 'blue');
drawTag(mainAxis, 1150, '20.25570', 'red');

// MACD pane: the first part of each line is taken from a crop (x / 1.12, 1300 + y / 3)
const fromCrop = pts => pts.map(([x, y]) => [Math.round(x / 1.12), Math.round(1300 + y / 3)]);

const macdLine = fromCrop([
    [5,850],[20,835],[30,885],[45,905],[58,938],[65,938],[80,860],[100,690],[115,540],[130,490],[150,440],[170,408],
    [185,415],[205,440],[230,482],[245,478],[252,495],[270,450],[295,385],[315,408],[335,395],[360,465],[380,455],
    [410,480],[440,495],[450,540],[462,545],[480,495],[495,495],[525,525],[550,515],[570,545],[600,585],[620,620],
    [650,675],[665,680],[695,750],[725,758],[735,765],[770,730],[780,745],[798,725],[825,780],[850,820],[880,840],
    [890,830],[920,860],[945,805],[970,700],[985,682],[1030,610],[1050,570],[1072,572],[1085,565],[1115,568],
    [1140,620],[1165,670],[1180,665],[1210,685],[1240,650],[1270,645],[1285,670],[1305,750],[1325,785],[1345,880],
    [1360,893],[1385,820],[1420,745],[1445,732],[1470,780],[1500,720],[1520,660],[1540,490],[1568,410]
]).concat([
    [1459,1412],[1490,1416],[1520,1438],[1555,1530],[1575,1565],[1591,1571],[1632,1550],[1673,1546],[1724,1567],[1775,1561],
    [1836,1575],[1907,1571],[1948,1591],[1989,1626],[2010,1638],[2050,1622],[2081,1595],[2101,1601],[2130,1627]
]);

const signalLine = fromCrop([
    [5,835],[20,835],[45,860],[70,885],[90,885],[110,820],[130,690],[150,560],[180,455],[210,433],[240,455],[270,470],
    [290,465],[345,410],[360,410],[390,435],[430,470],[470,508],[500,512],[540,510],[580,525],[620,565],[660,630],
    [700,695],[745,750],[790,748],[815,745],[840,755],[880,805],[930,845],[960,830],[990,770],[1020,680],[1060,610],
    [1120,568],[1150,590],[1210,665],[1235,675],[1280,660],[1310,690],[1350,780],[1385,840],[1405,845],[1440,790],
    [1465,755],[1495,748],[1525,715],[1550,650],[1568,580]
]).concat([
    [1430,1435],[1470,1420],[1520,1445],[1551,1490],[1591,1525],[1632,1560],[1673,1552],[1724,1565],[1775,1565],
    [1836,1560],[1907,1552],[1948,1570],[1989,1620],[2020,1637],[2050,1622],[2081,1603],[2130,1610]
]);

function valueAt(line, x) {
    for (let i = 1; i < line.length; i++) {
        if (line[i][0] >= x) {
            const [x0, y0] = line[i - 1];
            const [x1, y1] = line[i];
            return y0 + (y1 - y0) * (x - x0) / (x1 - x0);
        }
    }
    return line[line.length - 1][1];
}

const studyPlot = document.getElementById('studyPlot');
const studyAxis = document.getElementById('studyAxis');

add(studyAxis, 'line', { x1: 3047.5, x2: 3047.5, y1: 1385, y2: 1659, class: 'axis-line' });
add(studyPlot, 'line', { x1: 4, x2: 3047, y1: 1658.5, y2: 1658.5, class: 'axis-line' });

[[1422, '0.05'], [1522, '0.00'], [1623, '-0.05']].forEach(([y, label]) => {
    add(studyPlot, 'line', { x1: 4, x2: 3047, y1: y + 0.5, y2: y + 0.5, class: y === 1522 ? 'grid-mark' : 'grid' });
    if (label !== '-0.05') {
        add(studyAxis, 'text', { x: 3052, y: y + 10, class: 'axis-label' }, label);
    }
    add(studyAxis, 'line', { x1: 3047, x2: 3052, y1: y + 0.5, y2: y + 0.5, class: 'axis-tick' });
});

[759, 1308, 1879, 2244, 2725].forEach(x => {
    add(studyPlot, 'line', { x1: x, x2: x, y1: 1385, y2: 1659, class: 'grid-v' });
});

for (let x = 4; x < 2130; x += BAR_STEP) {
    const diff = (valueAt(signalLine, x) - valueAt(macdLine, x)) * 1.1;
    const px = Math.round(x) + 0.5;
    add(studyPlot, 'line', { x1: px, x2: px, y1: 1522, y2: 1522 - diff, class: 'hist' });
}

drawLine(studyPlot, macdLine, 'line-blue');
drawLine(studyPlot, signalLine, 'line-orange');

drawTag(studyAxis, 1538, '-0.01', 'pink');
drawTag(studyAxis, 1627, '-0.05', 'blue');
drawTag(studyAxis, 1609, '-0.04', 'orange', true);

// time axis
const timeAxis = document.getElementById('timeAxis');
add(timeAxis, 'text', { x: 5, y: 1690, class: 'time-label dyn-label' }, 'Dyn');
add(timeAxis, 'rect', { x: 62.5, y: 1669.5, width: 17, height: 16, class: 'dyn-box' });
add(timeAxis, 'text', { x: 71, y: 1682, class: 'dyn-mark' }, 'fc');
[[759, '28'], [1306, 'dic.'], [1878, '06'], [2244, '08']].forEach(([x, label]) => {
    add(timeAxis, 'text', { x: x, y: 1690, class: 'time-label' }, label);
});
add(timeAxis, 'rect', { x: 2616, y: 1664, width: 216, height: 33, class: 'time-tag' });
add(timeAxis, 'text', { x: 2724, y: 1690, class: 'time-now' }, '21:00 12/12/2016');
```
